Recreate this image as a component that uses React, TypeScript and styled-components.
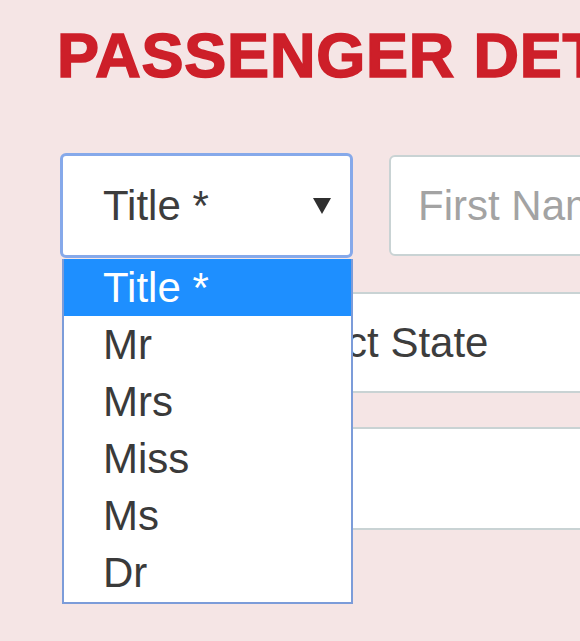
import React from "react";
import styled, { createGlobalStyle } from "styled-components";

const Global = createGlobalStyle`
  html, body {
    margin: 0;
    padding: 0;
    background: #f5e5e5;
    overflow: hidden;
  }
  body {
    font-family: "Liberation Sans", Arial, sans-serif;
  }
`;

const Page = styled.div`
  width: 580px;
  height: 641px;
  overflow: hidden;
  padding: 24px 0 0 57px;
  box-sizing: border-box;
  background: #f5e5e5;
`;

const Heading = styled.h1`
  margin: 0;
  font-family: "Liberation Sans", Arial, sans-serif;
  font-weight: 700;
  font-size: 63px;
  line-height: 62px;
  color: #cd1f29;
  -webkit-text-stroke: 1.6px #cd1f29;
  letter-spacing: 0.8px;
  white-space: nowrap;
`;

const Form = styled.div`
  margin-top: 67px;
  padding-left: 3px;
  display: flex;
  flex-direction: column;
  gap: 34px;
  width: 1000px;
`;

const Row = styled.div<{ $indent?: number }>`
  display: flex;
  align-items: center;
  gap: 36px;
  padding-left: ${(p) => p.$indent ?? 0}px;
`;

const SelectWrap = styled.div`
  position: relative;
  flex: 0 0 auto;
`;

const SelectBox = styled.div<{ $w: number; $h: number; $focused?: boolean }>`
  box-sizing: border-box;
  width: ${(p) => p.$w}px;
  height: ${(p) => p.$h}px;
  background: #fff;
  border: ${(p) => (p.$focused ? "3px solid #86a9ea" : "2px solid #c9d3d4")};
  border-radius: 6px;
  display: flex;
  align-items: center;
  justify-content: space-between;
  padding: 0 19px 0 40px;
  font-size: 42px;
  color: #3d3d3d;
  white-space: nowrap;
`;

const Arrow = styled.svg`
  width: 18px;
  height: 16px;
  flex: 0 0 auto;
`;

const TextInput = styled.div<{ $w: number; $h: number }>`
  box-sizing: border-box;
  width: ${(p) => p.$w}px;
  height: ${(p) => p.$h}px;
  background: #fff;
  border: 2px solid #c9d3d4;
  border-radius: 6px;
  display: flex;
  align-items: center;
  padding-left: 27px;
  font-size: 42px;
  color: #a3a3a3;
  white-space: nowrap;
  flex: 0 0 auto;
`;

const Dropdown = styled.ul`
  position: absolute;
  top: 106px;
  left: 2px;
  width: 291px;
  box-sizing: border-box;
  margin: 0;
  padding: 0 0 1px;
  list-style: none;
  background: #fff;
  border: 2px solid #7c9cd9;
  border-top: none;
  z-index: 10;
`;

const Option = styled.li<{ $active?: boolean }>`
  height: 57px;
  display: flex;
  align-items: center;
  padding-left: 39px;
  font-size: 42px;
  color: ${(p) => (p.$active ? "#ffffff" : "#3a3a3a")};
  background: ${(p) => (p.$active ? "#1e8fff" : "transparent")};
  white-space: nowrap;
`;

const options = ["Title *", "Mr", "Mrs", "Miss", "Ms", "Dr"];

export default function App() {
  return (
    <Page>
      <Global />
      <Heading>PASSENGER DETAILS</Heading>
      <Form>
        <Row>
          <SelectWrap>
            <SelectBox $w={293} $h={105} $focused>
              <span>Title *</span>
              <Arrow viewBox="0 0 18 16">
                <polygon points="0,0 18,0 9,16" fill="#2f2f2f" />
              </Arrow>
            </SelectBox>
            <Dropdown>
              {options.map((o, i) => (
                <Option key={o} $active={i === 0}>
                  {o}
                </Option>
              ))}
            </Dropdown>
          </SelectWrap>
          <TextInput $w={320} $h={101}>First Name *</TextInput>
        </Row>
        <Row $indent={160}>
          <SelectBox $w={500} $h={101}>
            <span>Select State</span>
          </SelectBox>
        </Row>
        <Row $indent={160}>
          <TextInput $w={500} $h={103}>City</TextInput>
        </Row>
      </Form>
    </Page>
  );
}
